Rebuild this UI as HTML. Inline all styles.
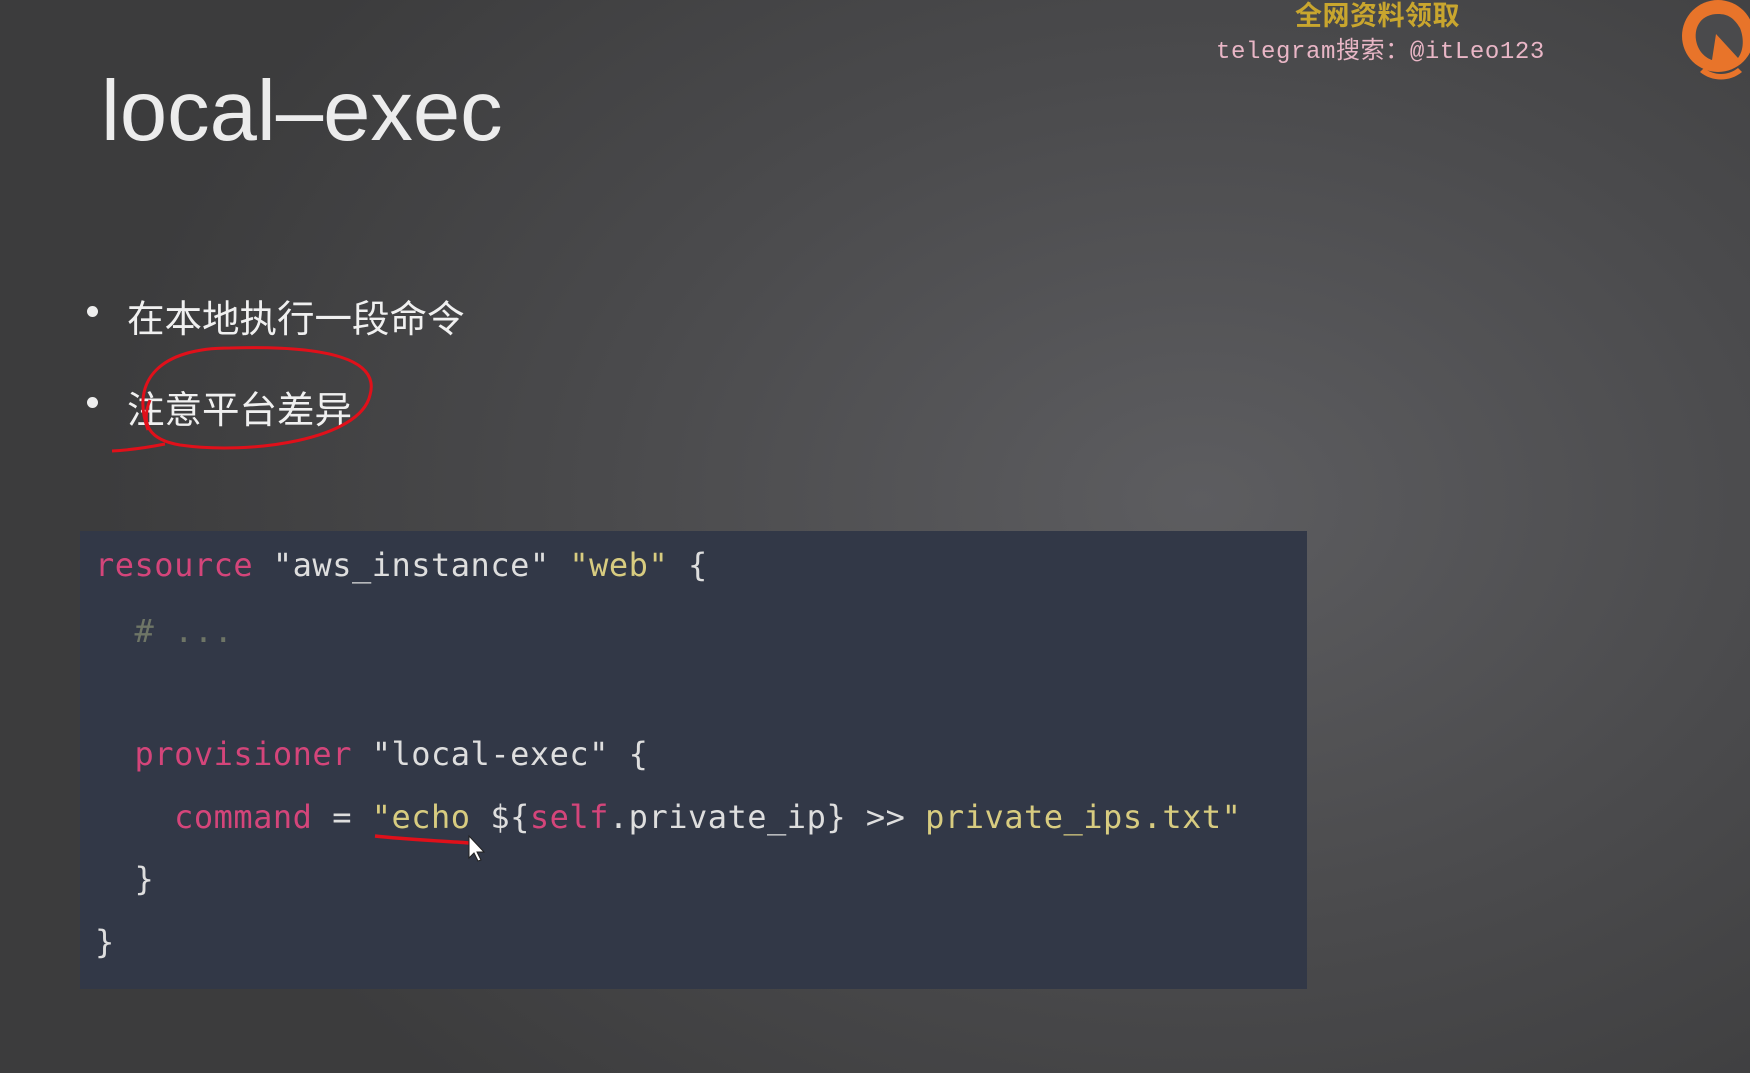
<!DOCTYPE html>
<html><head><meta charset="utf-8"><style>
html,body{margin:0;padding:0}
body{width:1750px;height:1073px;overflow:hidden;position:relative;
background:radial-gradient(ellipse 1100px 800px at 1200px 500px,#5d5d60 0%,#4a4a4c 55%,#3c3c3d 100%);
font-family:"Liberation Sans","Noto Sans CJK SC",sans-serif;}
.t{position:absolute;left:101px;top:63px;font-size:85px;color:#ececec;letter-spacing:0px}
.b{position:absolute;left:127px;font-size:37.5px;color:#f0f0f0}
.dot{position:absolute;left:87px;width:11px;height:11px;border-radius:50%;background:#eee}
.code{position:absolute;left:80px;top:531px;width:1227px;height:458px;background:#323847}
.l{position:absolute;font-family:"DejaVu Sans Mono","Liberation Mono",monospace;font-size:32px;color:#dedede;white-space:pre;letter-spacing:0.5px}
.k{color:#d4457a}.s{color:#d8cc80}.c{color:#6e7566}
.w1{position:absolute;left:1295px;top:-6px;font-size:27px;color:#c9a62e;font-weight:bold;letter-spacing:0.5px}
.w2{position:absolute;left:1216px;top:30px;font-size:24px;color:#e9b6c6;font-family:"Liberation Mono","Noto Sans CJK SC",monospace;letter-spacing:0.6px}
</style></head><body>
<div class="t">local–exec</div>
<div class="dot" style="top:306px"></div><div class="b" style="top:288px">在本地执行一段命令</div>
<div class="dot" style="top:397px"></div><div class="b" style="top:379px">注意平台差异</div>
<div class="code">
<div class="l" style="left:15px;top:15px"><span class="k">resource</span> "aws_instance" <span class="s">"web"</span> {</div>
<div class="l" style="left:15px;top:81px"><span class="c">  # ...</span></div>
<div class="l" style="left:15px;top:204px">  <span class="k">provisioner</span> "local-exec" {</div>
<div class="l" style="left:15px;top:267px">    <span class="k">command</span> = <span class="s">"echo </span>${<span class="k">self</span>.private_ip} &gt;&gt; <span class="s">private_ips.txt"</span></div>
<div class="l" style="left:15px;top:329px">  }</div>
<div class="l" style="left:15px;top:392px">}</div>
</div>
<svg style="position:absolute;left:0;top:0" width="1750" height="1073">
<path d="M148 430 C130 380 160 348 230 348 C330 345 380 360 370 395 C360 440 250 455 180 445 C150 440 140 425 150 400" fill="none" stroke="#e0101a" stroke-width="3"/>
<path d="M112 451 C130 450 150 447 165 444" fill="none" stroke="#e0101a" stroke-width="3"/>
<path d="M375 836 C400 839 440 841 470 843" fill="none" stroke="#e0101a" stroke-width="3.5"/>
<path d="M469 836 l0 22 l5 -5 l4 8 l3 -1 l-4 -8 l7 0 z" fill="#fff" stroke="#222" stroke-width="1"/>
<circle cx="1718" cy="36" r="36" fill="#e8742a"/>
<path d="M1718 14 C1702 14 1694 26 1696 40 C1698 52 1706 58 1712 60 L1716 34 L1738 58 C1744 50 1744 38 1740 28 C1734 18 1728 14 1718 14 Z" fill="#4a4a4c"/>
<path d="M1700 72 C1712 82 1730 82 1742 72 L1738 68 C1728 76 1714 76 1704 68 Z" fill="#e8742a"/>
</svg>
<div class="w1">全网资料领取</div>
<div class="w2">telegram搜索：@itLeo123</div>
</body></html>
